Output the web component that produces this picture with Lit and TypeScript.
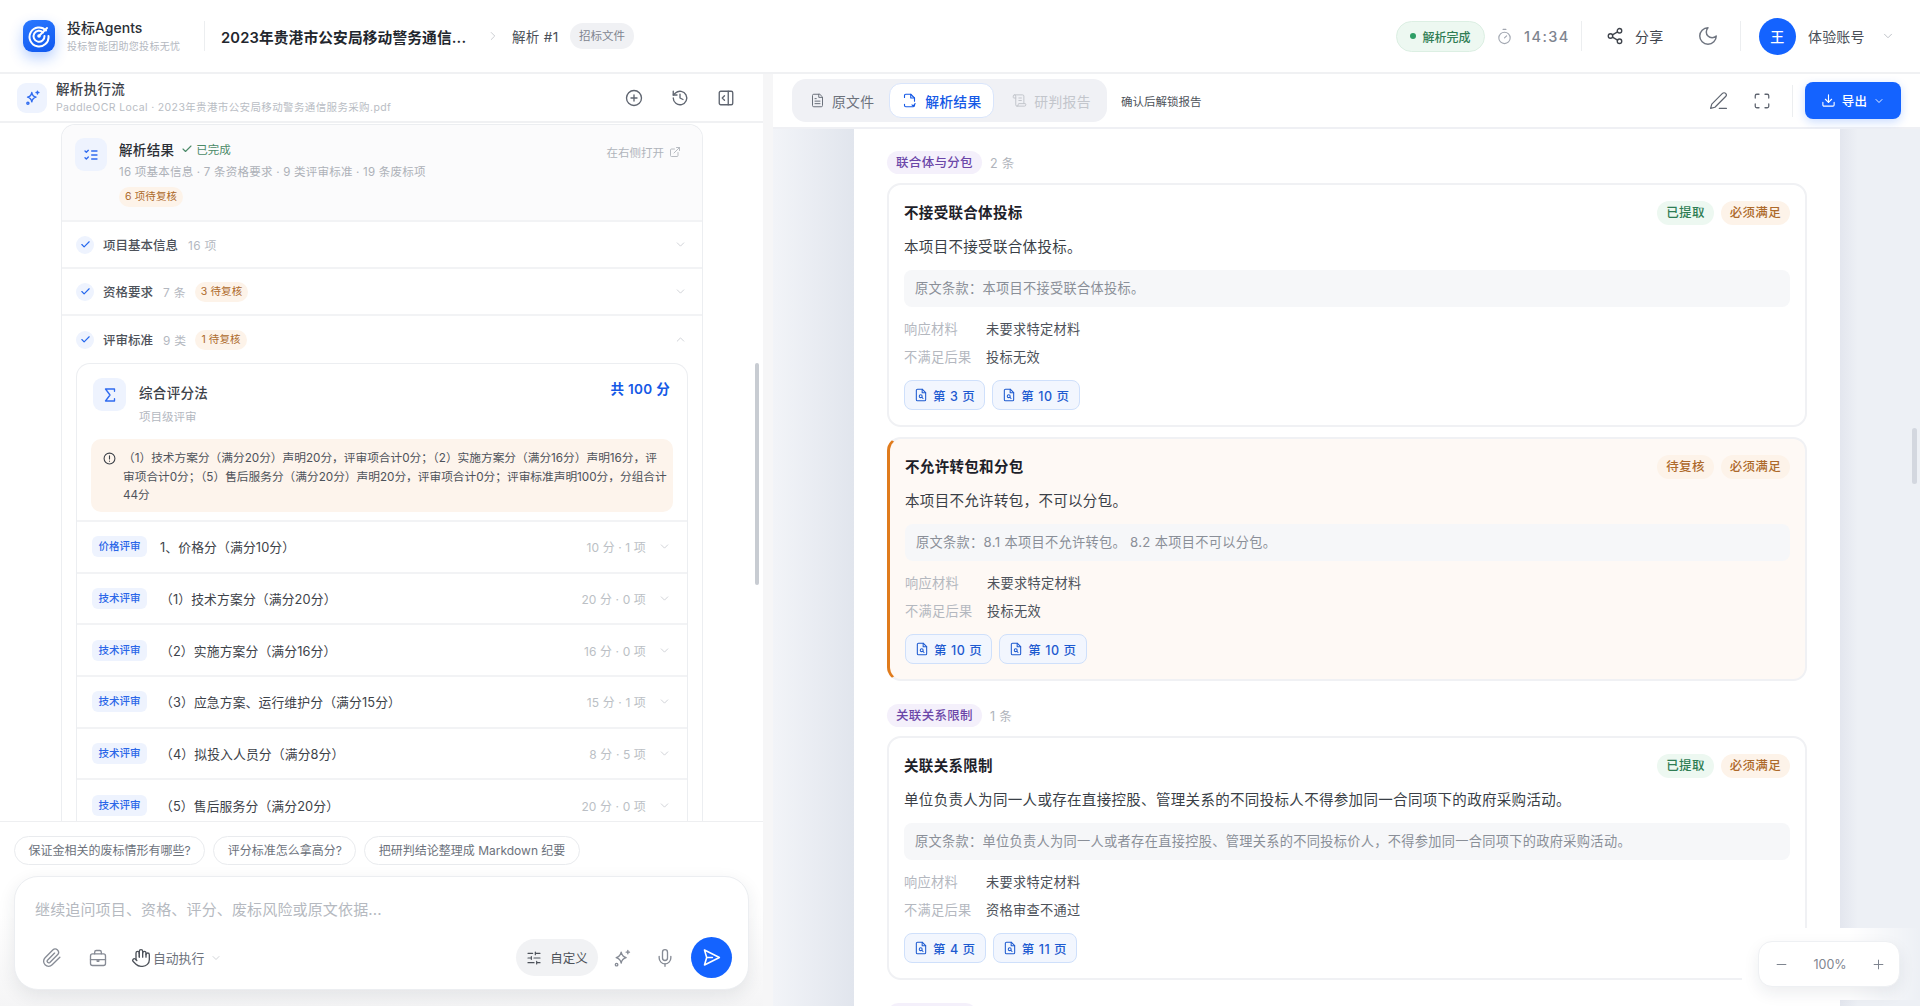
import { LitElement, html, css, svg } from "lit";
import { customElement } from "lit/decorators.js";

const ic = (size: number, body: unknown, sw = 1.8) => html`<svg class="ic" width=${size} height=${size} viewBox="0 0 24 24" fill="none" stroke="currentColor" stroke-width=${sw} stroke-linecap="round" stroke-linejoin="round">${body}</svg>`;

const I = {
  chevD: svg`<path d="m6 9 6 6 6-6"/>`,
  chevU: svg`<path d="m6 15 6-6 6 6"/>`,
  chevR: svg`<path d="m9 6 6 6-6 6"/>`,
  check: svg`<path d="M20 6 9 17l-5-5"/>`,
  file: svg`<path d="M15 2H6a2 2 0 0 0-2 2v16a2 2 0 0 0 2 2h12a2 2 0 0 0 2-2V7z"/><path d="M14 2v5h6"/><path d="M8 13h8M8 17h8M8 9h2"/>`,
  fileCheck: svg`<path d="M14 2H6a2 2 0 0 0-2 2v3M4 18v2a2 2 0 0 0 2 2h12a2 2 0 0 0 2-2v-2M14 2l6 6v5"/><path d="M14 2v6h6"/><path d="m16 19 2 2 3-4"/>`,
  scroll: svg`<path d="M19 17V5a2 2 0 0 0-2-2H4"/><path d="M8 21h12a2 2 0 0 0 2-2v-1a1 1 0 0 0-1-1H11a1 1 0 0 0-1 1v1a2 2 0 1 1-4 0V5a2 2 0 1 0-4 0v2a1 1 0 0 0 1 1h3"/><path d="M11 8h4M11 12h4"/>`,
  pageSearch: svg`<path d="M14 2H6a2 2 0 0 0-2 2v16a2 2 0 0 0 2 2h12a2 2 0 0 0 2-2V8z"/><path d="M14 2v6h6"/><circle cx="11.5" cy="14" r="2.5"/><path d="m13.5 16 2 2"/>`,
  sparkles: svg`<path d="M11 5c.8 4 2.2 5.6 6 6.5-3.8.9-5.2 2.5-6 6.500-.8-4-2.200-5.600-6-6.500 3.800-.9 5.200-2.500 6-6.500Z"/><path d="M19 3v4M17 5h4"/><circle cx="5.500" cy="20" r="1.500"/>`,
  plusC: svg`<circle cx="12" cy="12" r="10"/><path d="M12 8v8M8 12h8"/>`,
  history: svg`<path d="M3 12a9 9 0 1 0 3-6.700L3 8"/><path d="M3 3v5h5"/><path d="M12 7v5l4 2"/>`,
  panel: svg`<rect x="3" y="3" width="18" height="18" rx="2"/><path d="M15 3v18"/><path d="m10 9-3 3 3 3"/>`,
  list: svg`<path d="m3 6 2 2 3-3M3 16l2 2 3-3"/><path d="M13 6h8M13 12h8M13 18h8"/>`,
  ext: svg`<path d="M15 3h6v6"/><path d="M10 14 21 3"/><path d="M18 13v6a2 2 0 0 1-2 2H5a2 2 0 0 1-2-2V8a2 2 0 0 1 2-2h6"/>`,
  sigma: svg`<path d="M18 7V4H6l6 8-6 8h12v-3"/>`,
  alert: svg`<circle cx="12" cy="12" r="10"/><path d="M12 7v6M12 16.500v.5"/>`,
  clock: svg`<circle cx="12" cy="14" r="8"/><path d="M10 2h4M12 14l3-3"/>`,
  share: svg`<circle cx="18" cy="5" r="3"/><circle cx="6" cy="12" r="3"/><circle cx="18" cy="19" r="3"/><path d="m8.600 13.500 6.800 4M15.400 6.500l-6.800 4"/>`,
  moon: svg`<path d="M12 3a6 6 0 0 0 9 9 9 9 0 1 1-9-9Z"/>`,
  pen: svg`<path d="M17 3a2.800 2.800 0 1 1 4 4L7.500 20.500 2 22l1.500-5.500Z"/><path d="M13 22h9"/>`,
  full: svg`<path d="M8 3H5a2 2 0 0 0-2 2v3M21 8V5a2 2 0 0 0-2-2h-3M3 16v3a2 2 0 0 0 2 2h3M16 21h3a2 2 0 0 0 2-2v-3"/>`,
  down: svg`<path d="M21 15v4a2 2 0 0 1-2 2H5a2 2 0 0 1-2-2v-4"/><path d="m7 10 5 5 5-5"/><path d="M12 15V3"/>`,
  clip: svg`<path d="m21.400 11-9.200 9.200a6 6 0 0 1-8.500-8.500l9.200-9.200a4 4 0 0 1 5.700 5.700l-9.200 9.200a2 2 0 0 1-2.800-2.800l8.500-8.500"/>`,
  brief: svg`<rect x="3" y="7" width="18" height="14" rx="2.500"/><path d="M8 7V5a2 2 0 0 1 2-2h4a2 2 0 0 1 2 2v2"/><path d="M3 14h18M11 14h2v2h-2z"/>`,
  hand: svg`<path d="M18 11V6a2 2 0 0 0-4 0v-2a2 2 0 0 0-4 0v2.500"/><path d="M14 4v7M10 6v5"/><path d="M10 10.500V6a2 2 0 0 0-4 0v8"/><path d="M18 8a2 2 0 1 1 4 0v6a8 8 0 0 1-8 8h-2c-2.800 0-4.500-.9-6-2.400L2.400 16a2 2 0 0 1 2.800-2.800L7 15"/>`,
  sliders: svg`<path d="M21 5h-7M10 5H3M21 12h-9M8 12H3M21 19h-5M12 19H3M14 3v4M8 10v4M16 17v4"/>`,
  mic: svg`<rect x="9" y="2" width="6" height="13" rx="3"/><path d="M19 10v2a7 7 0 0 1-14 0v-2"/><path d="M12 19v3"/>`,
  send: svg`<path d="M4 3.500 21 12 4 20.500 6.500 12Z"/><path d="M6.500 12H13"/>`,
  minus: svg`<path d="M5 12h14"/>`,
  plus: svg`<path d="M12 5v14M5 12h14"/>`,
};

const criteria = [
  ["价格评审", "1、价格分（满分10分）", "10 分 · 1 项"],
  ["技术评审", "（1）技术方案分（满分20分）", "20 分 · 0 项"],
  ["技术评审", "（2）实施方案分（满分16分）", "16 分 · 0 项"],
  ["技术评审", "（3）应急方案、运行维护分（满分15分）", "15 分 · 1 项"],
  ["技术评审", "（4）拟投入人员分（满分8分）", "8 分 · 5 项"],
  ["技术评审", "（5）售后服务分（满分20分）", "20 分 · 0 项"],
];

const sections = [
  { tag: "联合体与分包", count: "2 条", cards: [
    { title: "不接受联合体投标", body: "本项目不接受联合体投标。", quote: "原文条款：本项目不接受联合体投标。", res: "投标无效", state: "已提取", warn: false, pages: ["第 3 页", "第 10 页"] },
    { title: "不允许转包和分包", body: "本项目不允许转包，不可以分包。", quote: "原文条款：8.1 本项目不允许转包。 8.2 本项目不可以分包。", res: "投标无效", state: "待复核", warn: true, pages: ["第 10 页", "第 10 页"] },
  ]},
  { tag: "关联关系限制", count: "1 条", cards: [
    { title: "关联关系限制", body: "单位负责人为同一人或存在直接控股、管理关系的不同投标人不得参加同一合同项下的政府采购活动。", quote: "原文条款：单位负责人为同一人或者存在直接控股、管理关系的不同投标价人，不得参加同一合同项下的政府采购活动。", res: "资格审查不通过", state: "已提取", warn: false, pages: ["第 4 页", "第 11 页"] },
  ]},
];

@customElement("app-root")
export class AppRoot extends LitElement {
  static styles = css`
    :host { display: block; height: 1006px; overflow: hidden; background: #fff; font-family: Inter, "Noto Sans CJK SC", sans-serif; color: #1d2129; letter-spacing: .02em; }
    * { box-sizing: border-box; }
    .ic { flex: none; display: block; }
    .top { height: 74px; border-bottom: 2px solid #f0f1f3; display: flex; align-items: center; padding: 0 25px 0 23px; background: #fff; }
    .logo { width: 32px; height: 32px; border-radius: 9px; background: linear-gradient(160deg, #2a78ff, #0f58f0); box-shadow: 0 6px 14px rgba(20,99,255,.3); display: flex; align-items: center; justify-content: center; color: #fff; }
    .brand { margin-left: 12px; width: 137px; }
    .brand b { display: block; font-weight: 500; font-size: 14px; line-height: 18px; letter-spacing: 0; color: #2b2f36; }
    .brand span { display: block; font-size: 10px; line-height: 14px; letter-spacing: .03em; color: #b4b8bf; margin-top: 2px; }
    .vd { width: 1px; background: #eceef0; height: 24px; flex: none; }
    .doc { margin-left: 16px; font-size: 14.700px; font-weight: 600; letter-spacing: .01em; color: #22262d; width: 265px; white-space: nowrap; }
    .crumb { color: #c3c6cc; width: 26px; }
    .run { font-size: 13.500px; color: #4a4f57; width: 58px; margin-left: 0; }
    .fbadge { background: #f0f1f4; color: #7f8590; border-radius: 13px; height: 26px; line-height: 26px; padding: 0 9px; font-size: 11.500px; letter-spacing: 0; }
    .sp { flex: 1; }
    .status { height: 31px; width: 89px; border: 1px solid #dcefe3; background: #edf8f1; border-radius: 16px; display: flex; align-items: center; justify-content: center; gap: 6px; font-size: 12px; font-weight: 500; color: #2f7d54; letter-spacing: 0; }
    .dot { width: 6px; height: 6px; border-radius: 50%; background: #2f9e66; }
    .clock { color: #a2a7b1; margin-left: 11px; }
    .time { font-size: 14.500px; font-weight: 500; color: #7f8590; letter-spacing: .1em; margin-left: 11px; width: 57px; }
    .top .vd { height: 30px; }
    .share { margin-left: 24px; color: #3f444c; display: flex; align-items: center; gap: 11px; font-size: 14px; width: 91px; }
    .moon { color: #6f7580; width: 43px; }
    .avatar { margin-left: 18px; width: 37px; height: 37px; border-radius: 50%; background: #1463ff; color: #fff; display: flex; align-items: center; justify-content: center; font-size: 14px; font-weight: 500; }
    .user { margin-left: 12px; font-size: 14px; color: #4a4f57; width: 73px; letter-spacing: .01em; }
    .ucv { color: #b5b9c0; }

    .main { display: flex; height: 932px; }
    .left { width: 763px; flex: none; display: flex; flex-direction: column; position: relative; background: #fff; }
    .split { width: 10px; flex: none; background: #f6f6f7; }
    .lhead { height: 49px; flex: none; border-bottom: 2px solid #f0f1f3; display: flex; align-items: center; padding: 0 28px 0 17px; }
    .lhead-ic { width: 30px; height: 30px; border-radius: 9px; background: #eef3fe; color: #2f6bf0; display: flex; align-items: center; justify-content: center; }
    .lhead-t { margin-left: 9px; flex: 1; }
    .lhead-t b { display: block; font-size: 13.500px; font-weight: 500; line-height: 18px; color: #3d4249; margin-top: 0; }
    .lhead-t span { display: block; font-size: 10.500px; line-height: 14px; color: #b9bdc4; margin-top: 3px; letter-spacing: .035em; }
    .lacts { display: flex; gap: 28px; color: #5f6570; padding-right: 0; }
    .lscroll { flex: 1; min-height: 0; overflow: hidden; padding: 1px 60px 0 61px; border-bottom: 1px solid #eeeff1; }
    .outer { border: 1px solid #eceef1; border-bottom: none; border-radius: 14px 14px 0 0; }
    .rhead { background: #fbfbfc; border-bottom: 2px solid #f2f3f5; height: 97px; padding: 13px 21px 0 13px; display: flex; border-radius: 14px 14px 0 0; }
    .ricon { width: 32px; height: 33px; border-radius: 9px; background: #eef3fe; color: #2f6bf0; display: flex; align-items: center; justify-content: center; flex: none; }
    .rbody { margin-left: 12px; flex: 1; }
    .rtitle { display: flex; align-items: center; height: 22px; font-size: 13.500px; font-weight: 500; color: #2b2f36; }
    .done { display: flex; align-items: center; gap: 3px; margin-left: 7px; font-size: 11.500px; font-weight: 400; color: #4b8a68; letter-spacing: 0; }
    .open { margin-left: auto; display: flex; align-items: center; gap: 5px; font-size: 11.500px; font-weight: 400; color: #b0b4bb; margin-top: 6px; letter-spacing: 0; }
    .meta { font-size: 11.500px; line-height: 18px; color: #adb1b8; margin-top: 3px; letter-spacing: .02em; }
    .wtag { display: inline-block; background: #fdf3e9; color: #ad6a2b; border-radius: 10px; height: 20px; line-height: 20px; padding: 0 6px; font-size: 10.500px; letter-spacing: .01em; }
    .meta + .wtag { margin-top: 6px; }
    .sec { height: 47px; display: flex; align-items: center; padding: 0 15px 0 14px; border-bottom: 2px solid #f2f3f5; }
    .sec.open-sec { border: none; height: 47px; }
    .chk { width: 18px; height: 18px; border-radius: 50%; background: #eef3fe; color: #2467ee; display: flex; align-items: center; justify-content: center; }
    .sec b { margin-left: 9px; font-size: 12.500px; font-weight: 500; color: #4d525a; letter-spacing: 0; }
    .sec i { font-style: normal; margin-left: 10px; font-size: 11.800px; color: #b4b8bf; }
    .sec .wtag { margin-left: 9px; }
    .sec .cv { margin-left: auto; color: #c6c9cf; }
    .inner { margin: 0 14px; border: 1px solid #eceef1; border-bottom: none; border-radius: 14px 14px 0 0; }
    .ihead { height: 75px; display: flex; padding: 14px 17px 0 16px; }
    .sig { width: 33px; height: 33px; border-radius: 9px; background: #eef3fe; color: #2f6bf0; display: flex; align-items: center; justify-content: center; flex: none; }
    .itxt { margin-left: 13px; flex: 1; }
    .itxt b { display: block; font-weight: 500; font-size: 13.500px; line-height: 31px; color: #3d4249; }
    .itxt span { display: block; font-size: 11.500px; line-height: 18px; margin-top: -1px; color: #b4b8bf; letter-spacing: 0; }
    .total { font-size: 13.500px; font-weight: 600; color: #1559e6; line-height: 22px; }
    .warnbox { margin: 0 14px 8px; height: 73px; background: #fdf4ec; border-radius: 10px; padding: 10px 12px; display: flex; gap: 7px; font-size: 11.700px; line-height: 18.500px; color: #4d525a; letter-spacing: 0; white-space: nowrap; }
    .warnbox .ic { color: #3d4249; margin-top: 3px; }
    .crit { height: 51.700px; border-top: 2px solid #f2f3f5; display: flex; align-items: center; padding: 0 16px 0 15px; }
    .ctag { width: 55px; height: 21px; line-height: 21px; border-radius: 6px; text-align: center; background: #eef3fe; color: #2a66e8; font-size: 10.500px; font-weight: 500; flex: none; letter-spacing: 0; }
    .cname { margin-left: 13px; font-size: 12.800px; color: #3d4249; letter-spacing: .01em; }
    .cinfo { margin-left: auto; font-size: 12px; color: #bbbfc5; letter-spacing: .01em; }
    .crit .cv { color: #c6c9cf; margin-left: 12px; }
    .bar { position: absolute; width: 4px; left: 755px; top: 289px; height: 222px; border-radius: 2px; background: #c8ccd2; }
    .lbottom { height: 184px; flex: none; background: linear-gradient(#fff 0, #fff 50%, #f5f5f6 100%); padding: 14px 14px 0; }
    .chips { display: flex; gap: 8px; padding-left: 0; }
    .chip { height: 29px; border: 1px solid #e9ebee; background: #fff; border-radius: 15px; padding: 0 13.500px; line-height: 27px; font-size: 12px; color: #6c727c; letter-spacing: 0; white-space: nowrap; }
    .box { margin-top: 11px; height: 114px; background: #fff; border: 1px solid #eceef1; border-radius: 24px; box-shadow: 0 6px 18px rgba(30,40,60,.09); padding: 0 16px 0 20px; }
    .ph { font-size: 15px; line-height: 22px; padding-top: 22px; color: #b5b9c0; letter-spacing: .01em; height: 60px; }
    .tools { display: flex; align-items: center; color: #868b95; height: 41px; padding-left: 7px; }
    .auto { font-size: 12.800px; color: #6c727c; margin-left: 2px; letter-spacing: 0; }
    .tools .cvm { margin-left: 6px; color: #c2c5cb; }
    .tools .hand { color: #4d525a; margin-left: 23px; }
    .tools .brief { margin-left: 26px; }
    .cust { margin-left: auto; height: 37px; width: 82px; background: #f1f2f4; border-radius: 19px; display: flex; align-items: center; justify-content: center; gap: 8px; font-size: 12.500px; color: #4d525a; letter-spacing: 0; }
    .cust .ic { color: #4d525a; }
    .spark { margin-left: 14px; }
    .micb { margin-left: 23px; }
    .sendb { margin-left: 16px; width: 41px; height: 41px; border-radius: 50%; background: #1463ff; color: #fff; display: flex; align-items: center; justify-content: center; }

    .right { flex: 1; min-width: 0; display: flex; flex-direction: column; position: relative; }
    .rtool { height: 55px; flex: none; border-bottom: 2px solid #eff0f4; display: flex; align-items: center; padding: 0 19px 0 19px; background: #fff; }
    .tabs { height: 43px; width: 315px; background: #f0f1f5; border-radius: 14px; display: flex; align-items: center; padding: 0 4px 0 18px; font-size: 13.800px; }
    .tab { display: flex; align-items: center; gap: 7px; color: #6c727c; }
    .tab.on { width: 105px; height: 35px; justify-content: center; gap: 8px; background: #fff; border: 1px solid #d9e5fb; border-radius: 12px; color: #1559e6; font-weight: 500; margin-left: 15px; }
    .tab.off { color: #c3c6cc; margin-left: 18px; }
    .hint { margin-left: 14px; font-size: 11.500px; color: #4d525a; letter-spacing: 0; }
    .rtool .pen { margin-left: auto; color: #5f6570; }
    .rtool .fs { margin-left: 25px; color: #5f6570; }
    .rtool .vd { margin-left: 21px; height: 32px; }
    .export { margin-left: 12px; width: 96px; height: 37px; border-radius: 8px; background: #1463ff; color: #fff; box-shadow: 0 3px 10px rgba(20,99,255,.22); display: flex; align-items: center; justify-content: center; gap: 6px; font-size: 12.500px; font-weight: 500; }
    .stage { flex: 1; min-height: 0; overflow: hidden; display: flex; background: linear-gradient(90deg, #f2f4f8 0, #e1e5ed 81px, #e3e6ee 1067px, #edf0f5 1085px); padding-left: 81px; }
    .page { width: 986px; flex: none; background: #fff; padding: 22px 33px 0; }
    .stag { display: flex; align-items: center; height: 23px; }
    .stag b { height: 23px; line-height: 23px; padding: 0 9px; border-radius: 12px; background: #f4f0fb; color: #6b46a8; font-size: 12.500px; font-weight: 500; }
    .stag span { margin-left: 8px; font-size: 12.500px; color: #b0b4bb; }
    .stag-next { width: 90px; height: 23px; border-radius: 12px; background: #f4f0fb; }
    .cards { margin-top: 9px; margin-bottom: 23px; display: flex; flex-direction: column; gap: 10px; }
    .card { height: 244px; border: 2px solid #f0f1f4; border-radius: 14px; padding: 16px 15px 0; background: #fff; }
    .card.warn { background: #fef9f5; border-left: 3px solid #e07b1c; }
    .chead { display: flex; align-items: flex-start; height: 24px; }
    .chead b { font-size: 14.500px; font-weight: 600; line-height: 23px; color: #1d2129; }
    .pills { margin-left: auto; display: flex; gap: 7px; }
    .pill { height: 24px; line-height: 24px; padding: 0 9px; border-radius: 12px; font-size: 12.500px; font-weight: 500; }
    .pill.g { background: #edf8f1; color: #2f7d54; }
    .pill.o { background: #fdf3e9; color: #ad6a2b; }
    .cbody { margin-top: 11px; font-size: 14.500px; line-height: 22px; color: #3a3f47; }
    .quote { margin-top: 12px; height: 37px; border-radius: 8px; background: #f6f7f9; padding: 0 11px; line-height: 37px; font-size: 13.200px; color: #8a8f98; }
    .kv { display: flex; margin-top: 6px; font-size: 13.200px; line-height: 22px; }
    .quote + .kv { margin-top: 11px; }
    .kv span { width: 82px; color: #b4b8bf; }
    .kv em { font-style: normal; color: #4d525a; }
    .pages { margin-top: 12px; display: flex; gap: 7px; }
    .pg { height: 30px; border: 1.500px solid #cfe0fb; background: #f2f6fe; border-radius: 8px; padding: 0 9px; display: flex; align-items: center; gap: 5px; font-size: 12.500px; font-weight: 500; letter-spacing: .045em; color: #1d5ad0; }
    .vbar { position: absolute; left: 1139px; top: 354px; width: 5px; height: 56px; border-radius: 3px; background: #d3d7df; }
    .fade { position: absolute; right: 0; bottom: 6px; width: 178px; height: 72px; background: linear-gradient(90deg, #fff 0, #fff 60%, rgba(255,255,255,0) 100%); }
    .zoom { position: absolute; left: 985px; bottom: 19px; width: 142px; height: 46px; background: #fff; border: 1px solid #eef0f3; border-radius: 14px; box-shadow: 0 6px 16px rgba(30,40,60,.08); display: flex; align-items: center; justify-content: space-between; padding: 0 13px 0 15px; font-size: 12.500px; color: #7f8590; letter-spacing: 0; }
    .zoom .ic { color: #7f8590; }
  `;

  private card(c: any) {
    return html`<div class="card ${c.warn ? "warn" : ""}">
      <div class="chead"><b>${c.title}</b><div class="pills"><span class="pill ${c.warn ? "o" : "g"}">${c.state}</span><span class="pill o">必须满足</span></div></div>
      <div class="cbody">${c.body}</div>
      <div class="quote">${c.quote}</div>
      <div class="kv"><span>响应材料</span><em>未要求特定材料</em></div>
      <div class="kv"><span>不满足后果</span><em>${c.res}</em></div>
      <div class="pages">${c.pages.map((p: string) => html`<div class="pg">${ic(14, I.pageSearch)}${p}</div>`)}</div>
    </div>`;
  }

  render() {
    return html`
    <div class="top">
      <div class="logo"><svg width="24" height="24" viewBox="0 0 24 24" fill="none" stroke="#fff" stroke-width="2" stroke-linecap="round"><path d="M19 6.500A9.500 9.500 0 1 0 21.500 12"/><path d="M16 8.500A5.500 5.500 0 1 0 17.500 12"/><circle cx="12" cy="12" r="1.800" fill="#fff" stroke="none"/><path d="m12 12 8-8"/></svg></div>
      <div class="brand"><b>投标Agents</b><span>投标智能团助您投标无忧</span></div>
      <div class="vd"></div>
      <div class="doc">2023年贵港市公安局移动警务通信...</div>
      <div class="crumb">${ic(14, I.chevR, 1.500)}</div>
      <div class="run">解析 #1</div>
      <div class="fbadge">招标文件</div>
      <div class="sp"></div>
      <div class="status"><span class="dot"></span>解析完成</div>
      <div class="clock">${ic(17, I.clock, 1.600)}</div>
      <div class="time">14:34</div>
      <div class="vd"></div>
      <div class="share">${ic(18, I.share)}分享</div>
      <div class="moon">${ic(22, I.moon, 1.600)}</div>
      <div class="vd"></div>
      <div class="avatar">王</div>
      <div class="user">体验账号</div>
      <div class="ucv">${ic(14, I.chevD, 1.500)}</div>
    </div>
    <div class="main">
      <div class="left">
        <div class="lhead">
          <div class="lhead-ic">${ic(17, I.sparkles, 2)}</div>
          <div class="lhead-t"><b>解析执行流</b><span>PaddleOCR Local · 2023年贵港市公安局移动警务通信服务采购.pdf</span></div>
          <div class="lacts">${ic(18, I.plusC)}${ic(18, I.history)}${ic(18, I.panel)}</div>
        </div>
        <div class="lscroll"><div class="outer">
          <div class="rhead">
            <div class="ricon">${ic(16, I.list, 2)}</div>
            <div class="rbody">
              <div class="rtitle">解析结果<span class="done">${ic(12, I.check, 2.200)}已完成</span><span class="open">在右侧打开${ic(12, I.ext, 1.800)}</span></div>
              <div class="meta">16 项基本信息 · 7 条资格要求 · 9 类评审标准 · 19 条废标项</div>
              <span class="wtag">6 项待复核</span>
            </div>
          </div>
          <div class="sec"><span class="chk">${ic(11, I.check, 2.500)}</span><b>项目基本信息</b><i>16 项</i><span class="cv">${ic(13, I.chevD, 1.500)}</span></div>
          <div class="sec"><span class="chk">${ic(11, I.check, 2.500)}</span><b>资格要求</b><i>7 条</i><span class="wtag">3 待复核</span><span class="cv">${ic(13, I.chevD, 1.500)}</span></div>
          <div class="sec open-sec"><span class="chk">${ic(11, I.check, 2.500)}</span><b>评审标准</b><i>9 类</i><span class="wtag">1 待复核</span><span class="cv">${ic(13, I.chevU, 1.500)}</span></div>
          <div class="inner">
            <div class="ihead">
              <div class="sig">${ic(18, I.sigma, 1.800)}</div>
              <div class="itxt"><b>综合评分法</b><span>项目级评审</span></div>
              <div class="total">共 100 分</div>
            </div>
            <div class="warnbox">${ic(13, I.alert, 2)}<div>（1）技术方案分（满分20分）声明20分，评审项合计0分；（2）实施方案分（满分16分）声明16分，评<br>审项合计0分；（5）售后服务分（满分20分）声明20分，评审项合计0分；评审标准声明100分，分组合计<br>44分</div></div>
            ${criteria.map(c => html`<div class="crit"><span class="ctag">${c[0]}</span><span class="cname">${c[1]}</span><span class="cinfo">${c[2]}</span><span class="cv">${ic(13, I.chevD, 1.500)}</span></div>`)}
          </div>
        </div></div>
        <div class="bar"></div>
        <div class="lbottom">
          <div class="chips"><span class="chip">保证金相关的废标情形有哪些?</span><span class="chip">评分标准怎么拿高分?</span><span class="chip">把研判结论整理成 Markdown 纪要</span></div>
          <div class="box">
            <div class="ph">继续追问项目、资格、评分、废标风险或原文依据...</div>
            <div class="tools">
              ${ic(20, I.clip, 1.600)}
              <span class="brief">${ic(20, I.brief, 1.600)}</span>
              <span class="hand">${ic(20, I.hand, 1.600)}</span>
              <span class="auto">自动执行</span>
              <span class="cvm">${ic(12, I.chevD, 1.500)}</span>
              <div class="cust">${ic(16, I.sliders, 1.800)}自定义</div>
              <span class="spark">${ic(20, I.sparkles, 1.600)}</span>
              <span class="micb">${ic(20, I.mic, 1.600)}</span>
              <div class="sendb">${ic(21, I.send, 1.800)}</div>
            </div>
          </div>
        </div>
      </div>
      <div class="split"></div>
      <div class="right">
        <div class="rtool">
          <div class="tabs">
            <span class="tab">${ic(15, I.file, 1.600)}原文件</span>
            <span class="tab on">${ic(15, I.fileCheck, 1.800)}解析结果</span>
            <span class="tab off">${ic(15, I.scroll, 1.600)}研判报告</span>
          </div>
          <div class="hint">确认后解锁报告</div>
          <span class="pen">${ic(19, I.pen, 1.500)}</span>
          <span class="fs">${ic(18, I.full, 1.700)}</span>
          <div class="vd"></div>
          <div class="export">${ic(15, I.down, 1.800)}导出${ic(12, I.chevD, 1.800)}</div>
        </div>
        <div class="stage"><div class="page">
          ${sections.map(s => html`<div class="stag"><b>${s.tag}</b><span>${s.count}</span></div><div class="cards">${s.cards.map(c => this.card(c))}</div>`)}
          <div class="stag-next"></div>
        </div></div>
        <div class="vbar"></div>
        <div class="fade"></div>
        <div class="zoom">${ic(15, I.minus, 1.600)}<span>100%</span>${ic(15, I.plus, 1.600)}</div>
      </div>
    </div>`;
  }
}
